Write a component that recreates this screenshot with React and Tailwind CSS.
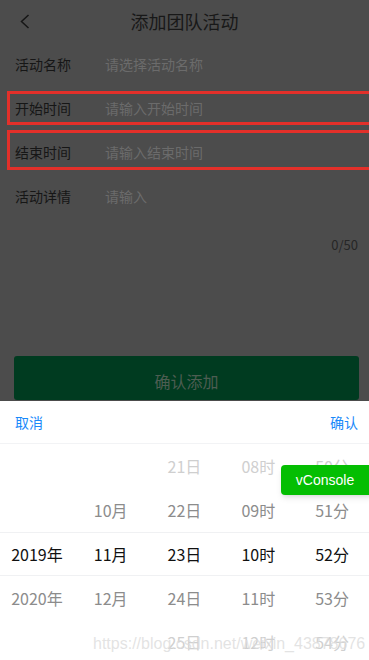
import React from "react";

const font = { fontFamily: '"Microsoft YaHei", "Noto Sans CJK SC", "Noto Sans", sans-serif' };

const columns = [
  ["", "", "2019年", "2020年", ""],
  ["", "10月", "11月", "12月", ""],
  ["21日", "22日", "23日", "24日", "25日"],
  ["08时", "09时", "10时", "11时", "12时"],
  ["50分", "51分", "52分", "53分", "54分"],
];

const rowColors = ["text-[#cfcfcf]", "text-[#8c8c8c]", "text-[#111]", "text-[#8c8c8c]", "text-[#cfcfcf]"];

function Field({ label, placeholder, box }) {
  return (
    <div className="relative flex h-[44px] items-center px-[15px] text-[14px]">
      <span className="w-[90px] text-[#161616]">{label}</span>
      <span className="text-[#6b6b6b]">{placeholder}</span>
      {box && <div className={"absolute left-[7px] right-[-4px] border-[3px] border-[#e3302a] " + box} />}
    </div>
  );
}

export default function App() {
  return (
    <div className="relative h-[660px] w-[369px] overflow-hidden bg-white" style={font}>
      {/* dimmed page */}
      <div className="h-[401px] overflow-hidden bg-[#4c4c4c]">
        <div className="relative flex h-[42px] items-center justify-center">
          <svg className="absolute left-[20px] top-[14px]" width="10" height="16" viewBox="0 0 10 16" fill="none">
            <polyline points="8.5,1 1.5,7.5 8.5,14" stroke="#161616" strokeWidth="1.5" />
          </svg>
          <span className="text-[18px] text-[#181818]">添加团队活动</span>
        </div>
        <Field label="活动名称" placeholder="请选择活动名称" />
        <Field label="开始时间" placeholder="请输入开始时间" box="top-[5px] h-[34px]" />
        <Field label="结束时间" placeholder="请输入结束时间" box="top-[0px] h-[40px]" />
        <Field label="活动详情" placeholder="请输入" />
        <div className="flex justify-end px-[11px] pt-[17px] text-[13px] text-[#262626]">0/50</div>
        <div className="ml-[14px] mr-[10px] mt-[101px] flex h-[44px] items-center justify-center rounded-[3px] bg-[#003b20] text-[16px] text-[#4d5d52]">
          <span className="pt-[6px]">确认添加</span>
        </div>
      </div>

      {/* picker */}
      <div className="bg-white">
        <div className="flex h-[43px] items-center justify-between border-b border-[#f2f3f5] pl-[15px] pr-[11px] text-[14px] text-[#1989fa]">
          <span>取消</span>
          <span>确认</span>
        </div>
        <div className="relative">
          <div className="absolute left-0 right-0 top-[88px] h-[44px] border-y border-[#f0f1f3]" />
          <div className="grid grid-cols-5">
            {columns.map((col, ci) => (
              <div key={ci} className="flex flex-col">
                {col.map((t, ri) => (
                  <div key={ri} className={"flex h-[44px] items-center justify-center text-[16px] " + rowColors[ri]}>
                    {t}
                  </div>
                ))}
              </div>
            ))}
          </div>
        </div>
      </div>

      {/* vConsole button */}
      <div className="absolute left-[281px] top-[465px] flex h-[30px] w-[92px] items-center justify-center rounded-[4px] bg-[#04be02] text-[14px] text-white shadow-md" style={{ fontFamily: '"Liberation Sans", Arial, sans-serif' }}>
        <span className="pr-[4px]">vConsole</span>
      </div>

      {/* watermark */}
      <div className="absolute left-[93px] top-[632px] text-[16px] text-[#dcdcdc]/80" style={{ fontFamily: '"Liberation Sans", Arial, sans-serif' }}>
        https://blog.csdn.net/weixin_43878676
      </div>
    </div>
  );
}
